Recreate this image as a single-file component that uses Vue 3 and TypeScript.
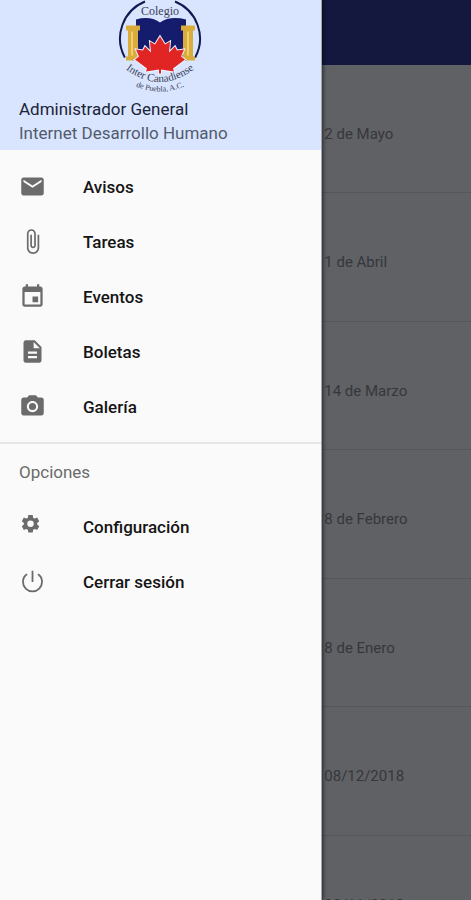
<script setup lang="ts">
interface MenuItem {
  label: string
  icon: string
}

const mainItems: MenuItem[] = [
  { label: 'Avisos', icon: 'M20 4H4c-1.1 0-2 .9-2 2v12c0 1.1.9 2 2 2h16c1.1 0 2-.9 2-2V6c0-1.100-.9-2-2-2zm0 4l-8 5-8-5V6l8 5 8-5v2z' },
  { label: 'Tareas', icon: 'M16.500 6v11.500c0 2.210-1.790 4-4 4s-4-1.790-4-4V5c0-1.380 1.120-2.500 2.500-2.500s2.500 1.120 2.500 2.500v10.500c0 .55-.45 1-1 1s-1-.45-1-1V6H10v9.500c0 1.380 1.120 2.500 2.500 2.500s2.500-1.120 2.500-2.500V5c0-2.210-1.790-4-4-4S7 2.790 7 5v12.500c0 3.040 2.460 5.500 5.500 5.500s5.500-2.460 5.500-5.500V6h-1.500z' },
  { label: 'Eventos', icon: 'M17 12h-5v5h5v-5zM16 1v2H8V1H6v2H5c-1.110 0-1.990.9-1.990 2L3 19c0 1.100.89 2 2 2h14c1.100 0 2-.9 2-2V5c0-1.100-.9-2-2-2h-1V1h-2zm3 18H5V8h14v11z' },
  { label: 'Boletas', icon: 'M14 2H6c-1.100 0-1.990.9-1.990 2L4 20c0 1.100.89 2 1.990 2H18c1.100 0 2-.9 2-2V8l-6-6zm2 16H8v-2h8v2zm0-4H8v-2h8v2zm-3-5V3.500L18.500 9H13z' },
  { label: 'Galería', icon: 'M12 8.800a3.200 3.200 0 1 0 0 6.400 3.200 3.200 0 0 0 0-6.400zM9 2L7.170 4H4c-1.100 0-2 .9-2 2v12c0 1.100.9 2 2 2h16c1.100 0 2-.9 2-2V6c0-1.100-.9-2-2-2h-3.170L15 2H9zm3 15c-2.760 0-5-2.240-5-5s2.240-5 5-5 5 2.240 5 5-2.240 5-5 5z' },
]

const optionItems: MenuItem[] = [
  { label: 'Configuración', icon: 'M16.200 10.300c0-.25.02-.5.02-.76s-.01-.5-.04-.75l1.600-1.250c.15-.12.19-.33.1-.5l-1.600-2.750c-.1-.17-.3-.24-.48-.17l-1.940.78a6 6 0 0 0-1.300-.76l-.3-2.040a.4.4 0 0 0-.4-.34H8.600a.4.4 0 0 0-.4.34l-.3 2.040c-.47.2-.9.45-1.300.76l-1.940-.78c-.18-.07-.38 0-.48.17L2.600 7.040c-.1.170-.06.380.1.500l1.640 1.250a6 6 0 0 0 0 1.520L2.700 11.560c-.15.12-.2.330-.1.500l1.580 2.750c.1.170.3.240.48.170l1.940-.78c.4.310.83.560 1.300.76l.3 2.040c.03.2.2.340.4.340h3.260c.2 0 .37-.14.4-.34l.3-2.040c.47-.2.9-.45 1.300-.76l1.940.78c.18.070.38 0 .48-.17l1.600-2.750c.1-.17.05-.38-.1-.5zM10.240 12.400a2.850 2.850 0 1 1 0-5.700 2.850 2.850 0 0 1 0 5.700z' },
  { label: 'Cerrar sesión', icon: 'M12.800 2.500h-1.600v10h1.600zM17.500 4.900l-1.150 1.150A8 8 0 0 1 19.700 12.300a7.700 7.700 0 1 1-15.400 0 8 8 0 0 1 3.350-6.250L6.500 4.900A9.200 9.200 0 0 0 2.700 12.300a9.300 9.300 0 0 0 18.600 0 9.200 9.200 0 0 0-3.800-7.400z' },
]

const entries: string[] = ['2 de Mayo', '1 de Abril', '14 de Marzo', '8 de Febrero', '8 de Enero', '08/12/2018', '08/11/2018']
</script>

<template>
  <div class="screen">
    <header class="toolbar"></header>
    <main>
      <ul class="entries">
        <li v-for="entry in entries" :key="entry">{{ entry }}</li>
      </ul>
    </main>

    <aside class="drawer">
      <div class="profile">
        <svg class="crest" viewBox="0 0 90 96" role="img" aria-label="Colegio Inter Canadiense de Puebla, A.C.">
          <defs>
            <path id="name-arc" d="M4 64Q44 99 84 64" />
            <path id="city-arc" d="M10 81Q44 101 78 81" />
          </defs>
          <path d="M8.800 57A40 40 0 0 1 29 1M59 1A40 40 0 0 1 79.200 57" fill="none" stroke="#111951" stroke-width="2" />
          <path d="M20 19Q34 15 44 22Q54 15 70 19V60H20z" fill="#151b6d" />
          <g fill="#d9ac3c">
            <path d="M10 25h14v5H10zM12 30h10v26H12zM10 56h14v4H10z" />
            <path d="M65 25h14v5H65zM67 30h10v26H67zM65 56h14v4H65z" />
          </g>
          <path d="M16 31v24M72 31v24" stroke="#f1cf73" stroke-width="2" />
          <path d="M44 36l5 8 5-3-1 11 6-6 2 4 7-1-3 7 4 3-12 9 1 3-13-2v4h-2v-4l-13 2 1-3-12-9 4-3-3-7 7 1 2-4 6 6-1-11 5 3z" fill="#e12424" stroke="#eef1ff" stroke-width="2" paint-order="stroke" />
          <text class="crest-title" x="44" y="14" text-anchor="middle">Colegio</text>
          <text class="crest-name"><textPath href="#name-arc" startOffset="50%" text-anchor="middle">Inter Canadiense</textPath></text>
          <text class="crest-city"><textPath href="#city-arc" startOffset="50%" text-anchor="middle">de Puebla, A.C.</textPath></text>
        </svg>
        <p class="user">Administrador General</p>
        <p class="area">Internet Desarrollo Humano</p>
      </div>

      <nav>
        <ul class="menu">
          <li v-for="item in mainItems" :key="item.label">
            <a href="#">
              <svg viewBox="0 0 24 24" aria-hidden="true"><path :d="item.icon" /></svg>
              <span>{{ item.label }}</span>
            </a>
          </li>
        </ul>
        <h2>Opciones</h2>
        <ul class="menu options">
          <li v-for="item in optionItems" :key="item.label">
            <a href="#">
              <svg viewBox="0 0 24 24" aria-hidden="true"><path :d="item.icon" /></svg>
              <span>{{ item.label }}</span>
            </a>
          </li>
        </ul>
      </nav>
    </aside>
  </div>
</template>

<style>
body {
  margin: 0;
}
</style>

<style scoped>
.screen {
  position: relative;
  display: flex;
  flex-direction: column;
  height: 100vh;
  overflow: hidden;
  background: #606165;
  font-family: Roboto, "Liberation Sans", sans-serif;
}

.toolbar {
  flex: none;
  height: 65px;
  background: #14183f;
}

main {
  flex: 1;
  min-height: 0;
}

ul {
  margin: 0;
  padding: 0;
  list-style: none;
}

.entries {
  display: grid;
  grid-template-rows: repeat(6, minmax(0, 2fr)) minmax(0, 1fr);
  height: 100%;
}

.entries li {
  box-sizing: border-box;
  padding: 59px 0 0 calc(68% + 4px);
  border-bottom: 1px solid #55565a;
  color: #36373b;
  font-size: 15px;
  line-height: 20px;
  white-space: nowrap;
}

.entries li:last-child {
  border-bottom: 0;
}

.drawer {
  position: absolute;
  top: 0;
  bottom: 0;
  left: 0;
  width: calc(68% + 1px);
  border-right: 1px solid #a4a5a8;
  background: #fafafa;
  box-shadow: 1px 0 4px rgba(0, 0, 0, 0.6);
}

.profile {
  padding: 0 19px 5px;
  background: #d9e5fe;
}

.crest {
  display: block;
  width: 90px;
  height: 97px;
  margin: 0 auto;
}

.crest text {
  fill: #3a4158;
  font-family: "Liberation Serif", serif;
}

.crest .crest-title {
  font-size: 12px;
}

.crest .crest-name {
  font-size: 11px;
}

.crest .crest-city {
  font-size: 8px;
}

.profile p {
  margin: 0;
  font-size: 17px;
  line-height: 24px;
  white-space: nowrap;
}

.profile .user {
  color: #1b2437;
}

.profile .area {
  color: #515b6e;
}

.menu {
  padding: 9px 0 8px;
}

.menu.options {
  padding-top: 15px;
}

.menu a {
  display: flex;
  align-items: center;
  gap: 37px;
  height: 55px;
  padding: 0 19px;
  color: #151515;
  font-size: 17px;
  font-weight: 500;
  text-decoration: none;
}

.menu svg {
  flex: none;
  width: 27px;
  height: 27px;
  fill: #6b6b6b;
}

h2 {
  margin: 0;
  padding: 16px 19px 0;
  border-top: 2px solid #e6e6e6;
  color: #6b6b6b;
  font-size: 17px;
  font-weight: 400;
  line-height: 24px;
}
</style>
